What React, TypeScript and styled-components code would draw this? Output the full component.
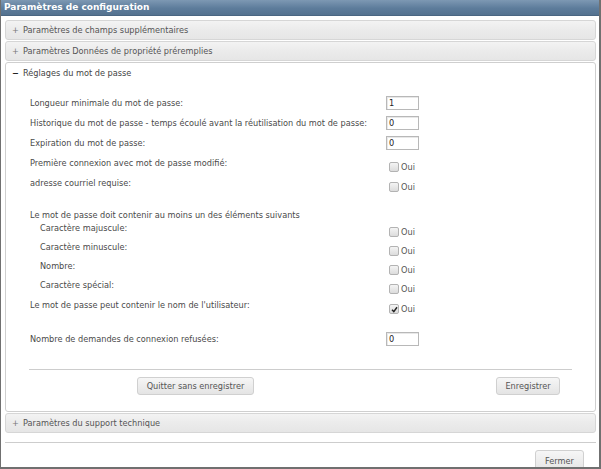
import React from 'react';
import styled, { createGlobalStyle } from 'styled-components';

const GlobalStyle = createGlobalStyle`
  html, body {
    margin: 0;
    padding: 0;
    background: #ffffff;
  }
  body {
    font-family: "DejaVu Sans", Verdana, sans-serif;
    font-size: 8.2px;
    color: #4a4a4a;
  }
`;

const Window = styled.div`
  width: 601px;
  height: 469px;
  box-sizing: border-box;
  border-left: 1px solid #707070;
  border-right: 2px solid #707070;
  border-bottom: 2px solid #707070;
  display: flex;
  flex-direction: column;
  overflow: hidden;
  background: #fff;
`;

const TitleBar = styled.div`
  height: 17px;
  margin: 0 -2px 0 -1px;
  background: linear-gradient(#7d98b3, #5d7c9b 55%, #54728f);
  color: #fff;
  font-weight: bold;
  font-size: 9px;
  line-height: 15px;
  padding-left: 4px;
  border-bottom: 1px solid #4a6682;
`;

const Content = styled.div`
  padding: 4px 3px 0 4px;
  display: flex;
  flex-direction: column;
  gap: 1px;
`;

const Header = styled.div`
  height: 20px;
  box-sizing: border-box;
  border: 1px solid #d6d6d6;
  border-radius: 3px;
  background: linear-gradient(#f3f3f3, #ebebeb 50%, #e6e6e6);
  display: flex;
  align-items: center;
  padding-left: 6px;
  color: #555;
`;

const Sign = styled.span<{ $open?: boolean }>`
  width: 11px;
  color: ${({ $open }) => ($open ? '#222' : '#777')};
  font-weight: ${({ $open }) => ($open ? 'bold' : 'normal')};
`;

const Panel = styled.div`
  border: 1px solid #cfcfcf;
  border-radius: 3px;
  background: #fff;
  height: 350px;
  box-sizing: border-box;
`;

const PanelHead = styled.div`
  height: 19px;
  display: flex;
  align-items: center;
  padding-left: 6px;
  color: #444;
`;

const Form = styled.div`
  padding: 14px 0 0 24px;
`;

const Row = styled.div<{ $h?: number }>`
  display: grid;
  grid-template-columns: 356px 1fr;
  height: ${({ $h }) => $h ?? 20}px;
`;

const Label = styled.div<{ $indent?: boolean }>`
  line-height: 14px;
  padding-left: ${({ $indent }) => ($indent ? 10 : 0)}px;
`;

const TextBox = styled.div`
  width: 33px;
  height: 14px;
  box-sizing: border-box;
  border: 1px solid #b8b8b8;
  box-shadow: inset 1px 1px 0 #e8e8e8;
  line-height: 12px;
  padding-left: 2px;
  color: #222;
`;

const Check = styled.label`
  display: flex;
  align-items: center;
  padding-left: 3px;
  margin-top: 5px;
  color: #555;
  height: 12px;
`;

const Box = styled.span`
  width: 8px;
  height: 8px;
  border: 1px solid #b3b3b3;
  border-radius: 2px;
  background: linear-gradient(#f4f4f4, #dcdcdc);
  margin-right: 2px;
  display: flex;
  align-items: center;
  justify-content: center;
`;

const Divider = styled.div<{ $inset?: number }>`
  height: 1px;
  background: #cdcdcd;
  margin: 0 ${({ $inset }) => $inset ?? 0}px;
`;

const Actions = styled.div`
  display: flex;
  justify-content: space-between;
  padding: 7px 35px 0 131px;
`;

const Button = styled.div<{ $w: number; $h?: number }>`
  width: ${({ $w }) => $w}px;
  height: ${({ $h }) => $h ?? 18}px;
  box-sizing: border-box;
  border: 1px solid #d0d0d0;
  border-radius: 3px;
  background: linear-gradient(#f6f6f6, #e4e4e4);
  display: flex;
  align-items: center;
  justify-content: center;
  color: #555;
`;

const Footer = styled.div`
  display: flex;
  flex-direction: column;
  padding: 9px 3px 0 4px;
`;

const FooterActions = styled.div`
  display: flex;
  justify-content: flex-end;
  padding: 7px 12px 0 0;
`;

const Tick = () => (
  <svg width="7" height="7" viewBox="0 0 7 7">
    <path d="M1 3.8 L2.8 5.6 L6 1.2" stroke="#222" strokeWidth="1.5" fill="none" />
  </svg>
);

function CheckField({ on }: { on?: boolean }) {
  return (
    <Check>
      <Box>{on && <Tick />}</Box>
      Oui
    </Check>
  );
}

export default function App() {
  return (
    <>
      <GlobalStyle />
      <Window>
        <TitleBar>Paramètres de configuration</TitleBar>
        <Content>
          <Header>
            <Sign>+</Sign>Paramètres de champs supplémentaires
          </Header>
          <Header>
            <Sign>+</Sign>Paramètres Données de propriété préremplies
          </Header>
          <Panel>
            <PanelHead>
              <Sign $open>−</Sign>Réglages du mot de passe
            </PanelHead>
            <Form>
              <Row>
                <Label>Longueur minimale du mot de passe:</Label>
                <TextBox>1</TextBox>
              </Row>
              <Row>
                <Label>Historique du mot de passe - temps écoulé avant la réutilisation du mot de passe:</Label>
                <TextBox>0</TextBox>
              </Row>
              <Row>
                <Label>Expiration du mot de passe:</Label>
                <TextBox>0</TextBox>
              </Row>
              <Row>
                <Label>Première connexion avec mot de passe modifié:</Label>
                <CheckField />
              </Row>
              <Row $h={32}>
                <Label>adresse courriel requise:</Label>
                <CheckField />
              </Row>
              <Row $h={13}>
                <Label>Le mot de passe doit contenir au moins un des éléments suivants</Label>
              </Row>
              <Row $h={19}>
                <Label $indent>Caractère majuscule:</Label>
                <CheckField />
              </Row>
              <Row $h={19}>
                <Label $indent>Caractère minuscule:</Label>
                <CheckField />
              </Row>
              <Row $h={19}>
                <Label $indent>Nombre:</Label>
                <CheckField />
              </Row>
              <Row $h={20}>
                <Label $indent>Caractère spécial:</Label>
                <CheckField />
              </Row>
              <Row $h={34}>
                <Label>Le mot de passe peut contenir le nom de l'utilisateur:</Label>
                <CheckField on />
              </Row>
              <Row $h={37}>
                <Label>Nombre de demandes de connexion refusées:</Label>
                <TextBox>0</TextBox>
              </Row>
            </Form>
            <Divider $inset={23} />
            <Actions>
              <Button $w={117}>Quitter sans enregistrer</Button>
              <Button $w={64}>Enregistrer</Button>
            </Actions>
          </Panel>
          <Header>
            <Sign>+</Sign>Paramètres du support technique
          </Header>
        </Content>
        <Footer>
          <Divider />
          <FooterActions>
            <Button $w={49} $h={22}>Fermer</Button>
          </FooterActions>
        </Footer>
      </Window>
    </>
  );
}
